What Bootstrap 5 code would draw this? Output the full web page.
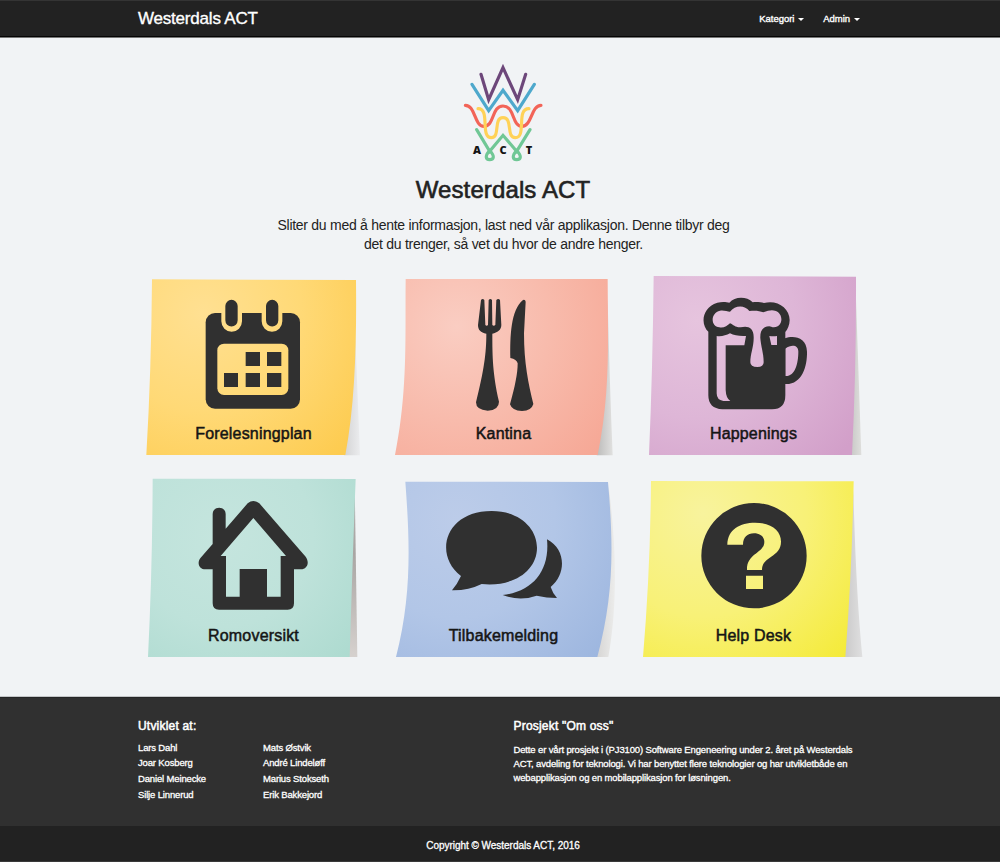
<!DOCTYPE html>
<html lang="no">
<head>
<meta charset="utf-8">
<meta name="viewport" content="width=device-width, initial-scale=1">
<title>Westerdals ACT</title>
<link rel="stylesheet" href="https://cdn.jsdelivr.net/npm/bootstrap@5.3.0/dist/css/bootstrap.min.css">
<style>
body{background:#f1f3f5;color:#222;font-family:"Liberation Sans",Arial,sans-serif;font-size:9.5px}
.page-col{width:750px;margin-left:128px;padding:0 10px}
.topbar{height:38px;padding:0;background:#222;border-top:1px solid #343434;border-bottom:1px solid #777;box-shadow:inset 0 -1px #050505}
.topbar .navbar-brand{font-size:17px;letter-spacing:-.2px;color:#fff;padding:0;margin:0;line-height:20px;-webkit-text-stroke:.35px #fff}
.topbar .nav-link{color:#fff;font-size:9.5px;line-height:14px;letter-spacing:-.05px;-webkit-text-stroke:.35px #fff}
.topbar .dropdown-toggle::after{border-top:3px solid;border-left:3px solid transparent;border-right:3px solid transparent;margin-left:4px;vertical-align:1.5px}
.topbar .navbar-nav{gap:19px;margin-right:8px}
.intro{padding-top:17px}
.intro h1{font-size:24px;line-height:24px;letter-spacing:.12px;margin:8px 0 14px;font-weight:400;-webkit-text-stroke:.6px #222}
.intro p{font-size:14px;line-height:19px;letter-spacing:-.275px;width:470px;margin:0 auto 16px;position:static;padding-left:1px}
.note-grid{width:750px;margin-left:128px;row-gap:5px}
.note-link{display:block;width:230px;height:195px;margin:0 auto;color:#151515;text-decoration:none}
.note-label{left:1px;right:0;top:156px;font-size:16px;line-height:16px;letter-spacing:.18px;-webkit-text-stroke:.5px #151515}
.lower .note-label{top:158px}
.ink{fill:#303030;fill-rule:evenodd}
.about{margin-top:32px;height:129px;background:#303030;color:#fff;padding-top:22.5px;box-shadow:0 -1px #c4c6c8,inset 0 1px #262626;-webkit-text-stroke:.3px #fff}
.about h2{font-size:12px;line-height:12px;margin:0 0 8px;letter-spacing:.2px;font-weight:400;-webkit-text-stroke:.5px #fff}
.about li{line-height:15.8px;letter-spacing:-.15px}
.about p{line-height:14px;letter-spacing:-.14px;margin:11.5px 0 0;white-space:nowrap}
.name-list{width:125px}
.project{padding-left:10.5px}
.copy{height:36px;background:#222;color:#fff;font-size:10px;letter-spacing:-.03px;padding-top:4px;-webkit-text-stroke:.3px #fff;border-bottom:1px solid #3a3a3a}
</style>
</head>
<body>
<nav class="navbar navbar-expand topbar">
  <div class="page-col d-flex align-items-center justify-content-between">
    <a class="navbar-brand" href="#">Westerdals ACT</a>
    <ul class="navbar-nav">
      <li class="nav-item dropdown"><a class="nav-link dropdown-toggle p-0" href="#" data-bs-toggle="dropdown">Kategori</a></li>
      <li class="nav-item dropdown"><a class="nav-link dropdown-toggle p-0" href="#" data-bs-toggle="dropdown">Admin</a></li>
    </ul>
  </div>
</nav>

<main>
  <header class="page-col intro text-center">
    <svg class="d-block mx-auto" width="110" height="115" viewBox="-6 0 330 345" fill="none" stroke-width="9.500" stroke-linecap="round" stroke-linejoin="miter">
      <path stroke="#6d477a" d="M93 58L116 134L159 38L203 134L227 58"/>
      <path stroke="#4ea8cc" d="M66 88L116 167L159 106L203 167L253 88"/>
      <path stroke="#f26458" d="M46 151C77 151 72 214 102 214C134 214 124 153 159 153C195 153 185 214 216 214C246 214 243 151 273 151"/>
      <path stroke="#ffd257" d="M84 161C122 160 89 248 124 248C152 248 129 188 159 188C190 188 167 248 196 248C231 248 197 160 237 161"/>
      <g stroke="#70c795"><path d="M80 224L119 289L159 241L200 289L240 224"/><path d="M119 287C104 303 107 314 119 314C132 314 135 303 119 287ZM200 287C185 303 188 314 200 314C213 314 216 303 200 287Z"/></g>
      <g fill="#151515" font-family="Open Sans, sans-serif" font-weight="800" font-size="33" text-anchor="middle"><text x="81" y="297">A</text><text x="159" y="297">C</text><text x="237" y="297">T</text></g>
    </svg>
    <h1>Westerdals ACT</h1>
    <p>Sliter du med å hente informasjon, last ned vår applikasjon. Denne tilbyr deg det du trenger, så vet du hvor de andre henger.</p>
  </header>

  <div class="row gx-0 note-grid text-center">
    <div class="col-4"><a class="note-link position-relative" href="#">
      <svg width="230" height="195" viewBox="-6 0 690 585">
        <defs>
          <radialGradient id="g1" gradientUnits="userSpaceOnUse" cx="190" cy="130" r="590"><stop stop-color="#ffe092"/><stop offset=".5" stop-color="#ffd976"/><stop offset="1" stop-color="#fdcb4f"/></radialGradient>
          <linearGradient id="s1" x1="0" x2="1"><stop stop-color="#d3d3d4"/><stop offset="1" stop-color="#ebecee"/></linearGradient>
          <mask id="cal"><path fill="#fff" d="M0 0H690V585H0Z"/><path stroke="#000" stroke-width="62" stroke-linecap="round" d="M275 90V154M396 90V154"/><rect x="232" y="221" width="213" height="154" rx="20"/></mask>
        </defs>
        <path fill="url(#s1)" d="M645 180L660 556H612Z"/>
        <path fill="url(#g1)" d="M36 28L648 30C650 210 646 400 616 555H19Q34 300 36 28Z"/>
        <rect class="ink" x="197" y="129" width="283" height="287" rx="28" mask="url(#cal)"/>
        <path class="ink" d="M256 108a18.500 18.500 0 0 1 37 0V151a18.500 18.500 0 0 1-37 0ZM378 108a18.500 18.500 0 0 1 37 0V151a18.500 18.500 0 0 1-37 0ZM317 246H360V288H317ZM381 246H424V288H381ZM252 309H294V351H252ZM317 309H360V351H317ZM381 309H424V351H381Z"/>
      </svg><span class="note-label position-absolute">Forelesningplan</span></a></div>
    <div class="col-4"><a class="note-link position-relative" href="#">
      <svg width="230" height="195" viewBox="-6 0 690 585">
        <defs><radialGradient id="g2" gradientUnits="userSpaceOnUse" cx="200" cy="170" r="560"><stop stop-color="#facdc2"/><stop offset=".5" stop-color="#f8bbac"/><stop offset="1" stop-color="#f6a896"/></radialGradient>
        <linearGradient id="s2" x1="0" x2="1"><stop stop-color="#bcbbba"/><stop offset="1" stop-color="#e0e0df"/></linearGradient></defs>
        <path fill="url(#s2)" d="M653 90Q659 340 668 556H620Z"/>
        <path fill="url(#g2)" d="M47 27H653C654 220 661 370 623 555H15C54 360 45 200 47 27Z"/>
        <path class="ink" d="M273 90Q278 84 283 90L286 165Q290 169 294 165L296 90Q301 84 306 90L307 165Q311 169 316 165L319 90Q325 84 330 90L334 165C334 180 322 188 307 191C307 260 308 310 327 395Q327 420 293 422Q258 420 258 397C282 300 289 250 289 191C272 188 264 180 264 165Z"/>
        <path class="ink" d="M399 90Q406 88 407 95L402 190C402 280 415 340 430 402Q425 422 396 423Q366 422 360 403C375 350 383 310 383 280Q380 268 361 264C360 200 362 120 399 90Z"/>
      </svg><span class="note-label position-absolute">Kantina</span></a></div>
    <div class="col-4"><a class="note-link position-relative" href="#">
      <svg width="230" height="195" viewBox="-6 0 690 585">
        <defs><radialGradient id="g3" gradientUnits="userSpaceOnUse" cx="170" cy="150" r="590"><stop stop-color="#e6c4de"/><stop offset=".5" stop-color="#deb6d7"/><stop offset="1" stop-color="#d29fc9"/></radialGradient>
        <linearGradient id="s3" x1="0" x2="1"><stop stop-color="#c8c8c6"/><stop offset="1" stop-color="#dededc"/></linearGradient></defs>
        <path fill="url(#s3)" d="M647 60L664 555H632Z"/>
        <path fill="url(#g3)" d="M41 18L648 20Q649 300 636 555H27Q38 300 41 18Z"/>
        <path class="ink" d="M205 185C181 163 185 113 232 98C247 94 260 96 268 98C285 79 320 79 338 97C350 95 362 97 372 99C410 88 449 113 449 150C449 165 443 178 436 186V376Q436 418 396 418H247Q205 416 205 376ZM240 122C250 120 262 124 270 125C285 105 314 104 328 123C345 121 358 122 370 127C385 120 398 119 405 122C432 130 430 170 402 172C396 172 391 170 388 169C366 170 360 185 361 205C363 230 371 250 371 277Q371 291 352 291Q331 291 331 277C331 250 342 230 341 200C341 172 322 166 302 172C286 173 281 165 270 160C262 168 250 175 238 172C210 168 212 128 240 122ZM230 198C245 200 258 196 270 190C282 197 300 199 318 198L313 226H257V360Q258 385 271 393H250Q230 390 230 370ZM388 198Q400 200 411 198V225H394Z"/>
        <path class="ink" d="M435 205C460 195 500 201 501 245C502 290 485 345 435 342ZM436 236C455 222 475 225 475 245C475 280 465 320 436 318Z"/>
      </svg><span class="note-label position-absolute">Happenings</span></a></div>
    <div class="col-4 lower"><a class="note-link position-relative" href="#">
      <svg width="230" height="195" viewBox="-6 0 690 585">
        <defs><radialGradient id="g4" gradientUnits="userSpaceOnUse" cx="250" cy="200" r="540"><stop stop-color="#c5e5de"/><stop offset=".5" stop-color="#bee2da"/><stop offset="1" stop-color="#acdacf"/></radialGradient>
        <linearGradient id="s4" x1="0" y1="0" x2="0" y2="1"><stop stop-color="#b5b2b0"/><stop offset=".4" stop-color="#a9a5a3"/><stop offset="1" stop-color="#d6d1ce"/></linearGradient></defs>
        <path fill="url(#s4)" d="M644 40L652 561H625Z"/>
        <path fill="url(#g4)" d="M38 26L647 27Q638 260 629 561H24Q37 300 38 26Z"/>
        <path class="ink" d="M323 100Q340 86 358 100L497 260C510 278 501 298 483 298H462V400Q462 419 443 419H237Q218 419 218 400V298H197C176 298 170 277 182 263L218 222V132C218 107 257 107 257 132V176ZM340 144L438 258H422V380H381V297H299V380H258V258H242Z"/>
      </svg><span class="note-label position-absolute">Romoversikt</span></a></div>
    <div class="col-4 lower"><a class="note-link position-relative" href="#">
      <svg width="230" height="195" viewBox="-6 0 690 585">
        <defs><radialGradient id="g5" gradientUnits="userSpaceOnUse" cx="200" cy="150" r="590"><stop stop-color="#bccce9"/><stop offset=".5" stop-color="#b2c6e7"/><stop offset="1" stop-color="#9db6df"/></radialGradient>
        <linearGradient id="s5" x1="0" x2="1"><stop stop-color="#d5d4d3"/><stop offset="1" stop-color="#ececeb"/></linearGradient></defs>
        <path fill="url(#s5)" d="M656 50C675 200 687 380 655 561H618Z"/>
        <path fill="url(#g5)" d="M46 35L654 36C672 240 670 380 622 561H18C68 370 58 200 46 35Z"/>
        <path class="ink" d="M213 318C130 255 164 123 305 123C390 123 441 176 441 233C441 302 370 352 275 342Q235 362 186 361Q202 342 213 318Z"/>
        <path class="ink" d="M471 208C530 238 528 315 482 351Q488 370 501 384Q470 384 440 377Q390 395 338 375C430 365 480 300 471 208Z"/>
      </svg><span class="note-label position-absolute">Tilbakemelding</span></a></div>
    <div class="col-4 lower"><a class="note-link position-relative" href="#">
      <svg width="230" height="195" viewBox="-6 0 690 585">
        <defs><radialGradient id="g6" gradientUnits="userSpaceOnUse" cx="190" cy="130" r="620"><stop stop-color="#f8f39d"/><stop offset=".5" stop-color="#f8f177"/><stop offset="1" stop-color="#f4ea35"/></radialGradient>
        <linearGradient id="s6" x1="0" x2="1"><stop stop-color="#c9c8c8"/><stop offset="1" stop-color="#dfdfe0"/></linearGradient></defs>
        <path fill="url(#s6)" d="M640 60Q648 370 667 561H610Z"/>
        <path fill="url(#g6)" d="M33 33L641 34Q636 300 616 561H9Q31 300 33 33Z"/>
        <path class="ink" d="M184 257a158 158 0 1 0 316 0a158 158 0 1 0-316 0ZM262 224C263 178 300 158 345 158C395 158 423 182 423 215C423 262 365 259 366 300H321C320 249 373 251 373 215C373 200 360 190 342 190C322 190 309 202 309 224ZM318 317H369V357H318Z"/>
      </svg><span class="note-label position-absolute">Help Desk</span></a></div>
  </div>
</main>

<footer>
  <div class="about">
    <div class="page-col">
      <div class="row gx-0">
        <div class="col-6">
          <h2>Utviklet at:</h2>
          <div class="d-flex">
            <ul class="list-unstyled mb-0 name-list"><li>Lars Dahl</li><li>Joar Kosberg</li><li>Daniel Meinecke</li><li>Silje Linnerud</li></ul>
            <ul class="list-unstyled mb-0 name-list"><li>Mats Østvik</li><li>André Lindeløff</li><li>Marius Stokseth</li><li>Erik Bakkejord</li></ul>
          </div>
        </div>
        <div class="col-6 project">
          <h2>Prosjekt "Om oss"</h2>
          <p>Dette er vårt prosjekt i (PJ3100) Software Engeneering under 2. året på Westerdals<br>ACT, avdeling for teknologi. Vi har benyttet flere teknologier og har utvikletbåde en<br>webapplikasjon og en mobilapplikasjon for løsningen.</p>
        </div>
      </div>
    </div>
  </div>
  <div class="copy"><div class="page-col d-flex align-items-center justify-content-center h-100">Copyright © Westerdals ACT, 2016</div></div>
</footer>
<script src="https://cdn.jsdelivr.net/npm/bootstrap@5.3.0/dist/js/bootstrap.bundle.min.js"></script>
</body>
</html>
